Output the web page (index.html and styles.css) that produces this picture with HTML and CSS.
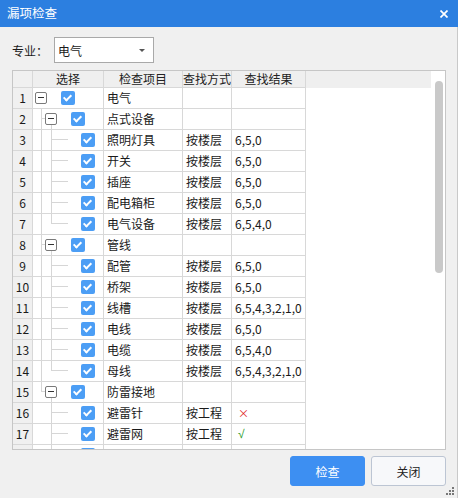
FILE: index.html
```html
<!DOCTYPE html>
<html lang="zh">
<head>
<meta charset="utf-8">
<title>漏项检查</title>
<link rel="stylesheet" href="styles.css">
</head>
<body>
<div class="window">
  <div class="titlebar">
    <span class="title">漏项检查</span>
    <svg class="close" width="8" height="8" viewBox="0 0 8 8"><path d="M0.5 0.5 L7.5 7.5 M7.5 0.5 L0.5 7.5" stroke="#fff" stroke-width="1.7"/></svg>
  </div>
  <div class="content">
    <div class="filter">
      <span class="filter-label">专业：</span>
      <div class="select"><span>电气</span><i class="caret"></i></div>
    </div>
    <div class="grid-box">
      <div class="grid">
        <div class="c num hd"></div><div class="c hd">选择</div><div class="c hd">检查项目</div><div class="c hd">查找方式</div><div class="c hd">查找结果</div><div class="c hd fill"></div>

        <div class="c num">1</div>
        <div class="c sel lv1"><span class="exp"></span><span class="chk"></span></div>
        <div class="c">电气</div><div class="c"></div><div class="c"></div><div class="c fill"></div>

        <div class="c num">2</div>
        <div class="c sel lv2"><i class="ln v1"></i><i class="ln h2"></i><i class="ln v2b"></i><span class="exp"></span><span class="chk"></span></div>
        <div class="c">点式设备</div><div class="c"></div><div class="c"></div><div class="c fill"></div>

        <div class="c num">3</div>
        <div class="c sel lv3"><i class="ln v1"></i><i class="ln v2"></i><i class="ln h3"></i><span class="chk"></span></div>
        <div class="c">照明灯具</div><div class="c">按楼层</div><div class="c">6,5,0</div><div class="c fill"></div>

        <div class="c num">4</div>
        <div class="c sel lv3"><i class="ln v1"></i><i class="ln v2"></i><i class="ln h3"></i><span class="chk"></span></div>
        <div class="c">开关</div><div class="c">按楼层</div><div class="c">6,5,0</div><div class="c fill"></div>

        <div class="c num">5</div>
        <div class="c sel lv3"><i class="ln v1"></i><i class="ln v2"></i><i class="ln h3"></i><span class="chk"></span></div>
        <div class="c">插座</div><div class="c">按楼层</div><div class="c">6,5,0</div><div class="c fill"></div>

        <div class="c num">6</div>
        <div class="c sel lv3"><i class="ln v1"></i><i class="ln v2"></i><i class="ln h3"></i><span class="chk"></span></div>
        <div class="c">配电箱柜</div><div class="c">按楼层</div><div class="c">6,5,0</div><div class="c fill"></div>

        <div class="c num">7</div>
        <div class="c sel lv3"><i class="ln v1"></i><i class="ln v2t"></i><i class="ln h3"></i><span class="chk"></span></div>
        <div class="c">电气设备</div><div class="c">按楼层</div><div class="c">6,5,4,0</div><div class="c fill"></div>

        <div class="c num">8</div>
        <div class="c sel lv2"><i class="ln v1"></i><i class="ln h2"></i><i class="ln v2b"></i><span class="exp"></span><span class="chk"></span></div>
        <div class="c">管线</div><div class="c"></div><div class="c"></div><div class="c fill"></div>

        <div class="c num">9</div>
        <div class="c sel lv3"><i class="ln v1"></i><i class="ln v2"></i><i class="ln h3"></i><span class="chk"></span></div>
        <div class="c">配管</div><div class="c">按楼层</div><div class="c">6,5,0</div><div class="c fill"></div>

        <div class="c num">10</div>
        <div class="c sel lv3"><i class="ln v1"></i><i class="ln v2"></i><i class="ln h3"></i><span class="chk"></span></div>
        <div class="c">桥架</div><div class="c">按楼层</div><div class="c">6,5,0</div><div class="c fill"></div>

        <div class="c num">11</div>
        <div class="c sel lv3"><i class="ln v1"></i><i class="ln v2"></i><i class="ln h3"></i><span class="chk"></span></div>
        <div class="c">线槽</div><div class="c">按楼层</div><div class="c">6,5,4,3,2,1,0</div><div class="c fill"></div>

        <div class="c num">12</div>
        <div class="c sel lv3"><i class="ln v1"></i><i class="ln v2"></i><i class="ln h3"></i><span class="chk"></span></div>
        <div class="c">电线</div><div class="c">按楼层</div><div class="c">6,5,0</div><div class="c fill"></div>

        <div class="c num">13</div>
        <div class="c sel lv3"><i class="ln v1"></i><i class="ln v2"></i><i class="ln h3"></i><span class="chk"></span></div>
        <div class="c">电缆</div><div class="c">按楼层</div><div class="c">6,5,4,0</div><div class="c fill"></div>

        <div class="c num">14</div>
        <div class="c sel lv3"><i class="ln v1"></i><i class="ln v2t"></i><i class="ln h3"></i><span class="chk"></span></div>
        <div class="c">母线</div><div class="c">按楼层</div><div class="c">6,5,4,3,2,1,0</div><div class="c fill"></div>

        <div class="c num">15</div>
        <div class="c sel lv2"><i class="ln v1t"></i><i class="ln h2"></i><i class="ln v2b"></i><span class="exp"></span><span class="chk"></span></div>
        <div class="c">防雷接地</div><div class="c"></div><div class="c"></div><div class="c fill"></div>

        <div class="c num">16</div>
        <div class="c sel lv3"><i class="ln v2"></i><i class="ln h3"></i><span class="chk"></span></div>
        <div class="c">避雷针</div><div class="c">按工程</div><div class="c"><span class="bad">×</span></div><div class="c fill"></div>

        <div class="c num">17</div>
        <div class="c sel lv3"><i class="ln v2"></i><i class="ln h3"></i><span class="chk"></span></div>
        <div class="c">避雷网</div><div class="c">按工程</div><div class="c"><span class="ok">√</span></div><div class="c fill"></div>

        <div class="c num"></div>
        <div class="c sel lv3"><i class="ln v2"></i><i class="ln h3"></i><span class="chk"></span></div>
        <div class="c"></div><div class="c"></div><div class="c"></div><div class="c fill"></div>
      </div>
      <div class="vbar"><div class="thumb"></div></div>
    </div>
    <div class="footer">
      <button class="btn primary">检查</button>
      <button class="btn">关闭</button>
      <div class="grip"><i></i><i></i><i></i><i></i><i></i><i></i></div>
    </div>
  </div>
</div>
</body>
</html>
```

FILE: styles.css
```css
* { box-sizing: border-box; }
html, body { margin: 0; padding: 0; }
body {
  background: #f0f0f0;
  font-family: "Noto Sans CJK SC", "Noto Sans", sans-serif;
  font-size: 12px;
  color: #1a1a1a;
}
.window {
  width: 458px;
  height: 498px;
  display: flex;
  flex-direction: column;
  background: #f0f0f0;
}
.titlebar {
  height: 27px;
  flex: none;
  background: #2c7fe0;
  color: #fff;
  display: flex;
  align-items: center;
  justify-content: space-between;
  padding: 0 10px 0 7px;
}
.title { font-size: 12.5px; line-height: 1; }
.close { display: block; }
.content {
  flex: 1;
  border-right: 1px solid #c9c9c9;
  position: relative;
}
.filter {
  display: flex;
  align-items: center;
  margin-top: 10px;
  padding-left: 12px;
  height: 26px;
}
.filter-label { width: 42px; color: #1a1a1a; }
.select {
  width: 100px;
  height: 26px;
  border: 1px solid #a9a9a9;
  background: #fff;
  display: flex;
  align-items: center;
  justify-content: space-between;
  padding: 0 8px 0 3px;
}
.caret {
  width: 0; height: 0;
  border-left: 3px solid transparent;
  border-right: 3px solid transparent;
  border-top: 3px solid #555;
}
.grid-box {
  margin: 7px 0 0 12px;
  width: 434px;
  height: 380px;
  border: 1px solid #c6c6c6;
  background: #fff;
  display: flex;
}
.grid {
  width: 418px;
  height: 378px;
  overflow: hidden;
  display: grid;
  grid-template-columns: 20px 71px 79px 49px 74px 125px;
  grid-template-rows: 17px;
  grid-auto-rows: 21px;
  align-content: start;
}
.c {
  border-right: 1px solid #d8d8d8;
  border-bottom: 1px solid #d8d8d8;
  display: flex;
  align-items: center;
  padding-left: 3px;
  white-space: nowrap;
  overflow: hidden;
  line-height: 1;
}
.c.fill { border: none; }
.c.hd {
  background: #efefef;
  justify-content: center;
  padding: 0;
  color: #222;
}
.c.num {
  background: #f0f0f0;
  justify-content: center;
  padding: 0;
}
.sel { position: relative; padding-left: 0; }
.ln { position: absolute; background: #d6d6d6; display: block; }
.v1 { left: 8px; top: 0; width: 1px; height: 20px; }
.v1t { left: 8px; top: 0; width: 1px; height: 10px; }
.h2 { left: 8px; top: 9px; width: 4px; height: 1px; }
.v2 { left: 18px; top: 0; width: 1px; height: 20px; }
.v2t { left: 18px; top: 0; width: 1px; height: 10px; }
.v2b { left: 18px; top: 16px; width: 1px; height: 4px; }
.h3 { left: 18px; top: 9px; width: 17px; height: 1px; }
.exp {
  width: 12px;
  height: 12px;
  border: 1px solid #7a7a7a;
  border-radius: 2px;
  background: #fff;
  position: relative;
  flex: none;
}
.exp::after {
  content: "";
  position: absolute;
  left: 2px;
  top: 4px;
  width: 6px;
  height: 1px;
  background: #333;
}
.chk {
  width: 14px;
  height: 14px;
  border-radius: 2px;
  background: #4c9ef5;
  flex: none;
  position: relative;
}
.chk::after {
  content: "";
  position: absolute;
  left: 4px;
  top: 2px;
  width: 3px;
  height: 6px;
  border-right: 2px solid #fff;
  border-bottom: 2px solid #fff;
  transform: rotate(45deg);
}
.lv1 .exp { margin-left: 2px; }
.lv1 .chk { margin-left: 14px; }
.lv2 .exp { margin-left: 12px; }
.lv2 .chk { margin-left: 14px; }
.lv3 .chk { margin-left: 48px; }
.bad { color: #e02424; font-size: 11px; margin-left: 3px; }
.ok {
  color: #2a9a2a;
  margin-left: 3px;
  font-family: "Liberation Sans", sans-serif;
  font-size: 12px;
}
.vbar {
  width: 14px;
  height: 378px;
  padding: 10px 0 0 4px;
}
.thumb {
  width: 8px;
  height: 192px;
  border-radius: 4px;
  background: #c9c9c9;
}
.footer {
  display: flex;
  justify-content: flex-end;
  gap: 6px;
  margin-top: 6px;
  padding-right: 11px;
}
.btn {
  width: 75px;
  height: 30px;
  border-radius: 3px;
  border: 1px solid #bcc5d3;
  background: #f7f8fa;
  color: #222;
  font-family: inherit;
  font-size: 12px;
  padding: 0;
}
.btn.primary {
  background: #3d8ff2;
  border-color: #3d8ff2;
  color: #fff;
}
.grip {
  position: absolute;
  right: 3px;
  bottom: 3px;
  width: 8px;
  height: 8px;
}
.grip i {
  position: absolute;
  width: 2px;
  height: 2px;
  background: #777;
}
.grip i:nth-child(1) { right: 0; top: 0; }
.grip i:nth-child(2) { right: 0; top: 3px; }
.grip i:nth-child(3) { right: 3px; top: 3px; }
.grip i:nth-child(4) { right: 0; top: 6px; }
.grip i:nth-child(5) { right: 3px; top: 6px; }
.grip i:nth-child(6) { right: 6px; top: 6px; }
```
